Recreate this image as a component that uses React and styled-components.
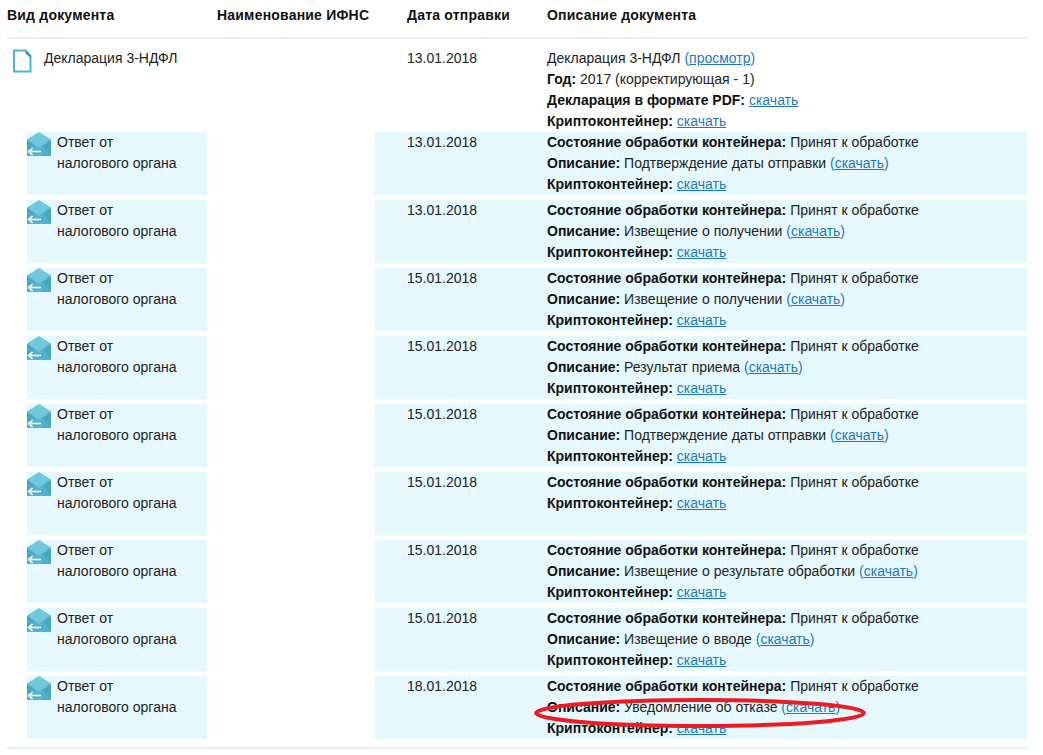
import React from "react";
import styled, { createGlobalStyle } from "styled-components";

const Global = createGlobalStyle`
  html, body {
    margin: 0;
    padding: 0;
    background: #fff;
    overflow: hidden;
  }
  body {
    font-family: "Liberation Sans", Arial, sans-serif;
    font-size: 14px;
    line-height: 21px;
    color: #222;
  }
`;

const Page = styled.div`
  position: relative;
  width: 1043px;
  height: 755px;
  overflow: hidden;
  padding: 0 16px 0 7px;
  box-sizing: border-box;
`;

const Head = styled.div`
  display: grid;
  grid-template-columns: 210px 158px 172px 1fr;
  height: 37px;
  border-bottom: 2px solid #e8f0f6;
  font-weight: bold;
  color: #111;
  line-height: 31px;
`;

const HeadCell = styled.div`
  padding-left: ${(p) => p.$pad || 0}px;
  letter-spacing: 0.2px;
`;

const MainRow = styled.div`
  display: grid;
  grid-template-columns: 210px 158px 172px 1fr;
  height: 93px;
  padding-top: 9px;
  box-sizing: border-box;
`;

const TopKind = styled.div`
  display: flex;
  gap: 8px;
  padding-left: 3px;
`;

const KindBlock = styled.div`
  display: flex;
  width: 180px;
  height: 63px;
  margin-left: 20px;
  background: #e5f8fd;
  gap: 6px;
`;

const ChildRow = styled.div`
  display: grid;
  grid-template-columns: 210px 158px 172px 1fr;
  height: 63px;
  margin-bottom: 5px;
`;

const Empty = styled.div``;

const DateCell = styled.div`
  padding-left: 32px;
  background: ${(p) => (p.$tinted ? "#e5f8fd" : "transparent")};
`;

const Descr = styled.div`
  background: ${(p) => (p.$tinted ? "#e5f8fd" : "transparent")};
`;

const Line = styled.div`
  height: 21px;
  white-space: nowrap;
`;

const Label = styled.b`
  color: #111;
`;

const Link = styled.a`
  color: #1f78bd;
  text-decoration: underline;
  cursor: pointer;
`;

const Paren = styled.span`
  color: #1f78bd;
`;

const IconBox = styled.svg`
  flex: none;
  display: block;
`;

const Footer = styled.div`
  height: 2px;
  margin-top: 8px;
  background: #e8f0f6;
`;

const Mark = styled.svg`
  position: absolute;
  left: 530px;
  top: 693px;
  pointer-events: none;
`;

const FileIcon = () => (
  <IconBox width="26" height="26" viewBox="0 0 26 26">
    <path d="M4 2.5h11.5l5 5.5v15.5H4z" fill="#fff" stroke="#4bb8d8" strokeWidth="2" />
    <path d="M20.5 9.5v-2l-5-5v3z" fill="#2f8fa8" />
  </IconBox>
);

const EnvelopeIcon = () => (
  <IconBox width="24" height="24" viewBox="0 0 24 24">
    <path d="M0 7.5L12 0l12 7.5V24H0z" fill="#6fc8dc" />
    <path d="M0 7.5L12 16l12-8.5V24H0z" fill="#44a8c4" />
    <path d="M0 18l8-5 4 3 4-3 8 11H0z" fill="#51b3cd" />
    <path d="M1 19.5h13" stroke="#fff" strokeWidth="1.6" fill="none" />
    <path d="M5.5 16L2 19.5 5.5 23" stroke="#fff" strokeWidth="1.6" fill="none" />
  </IconBox>
);

const rows = [
  { date: "13.01.2018", text: "Подтверждение даты отправки" },
  { date: "13.01.2018", text: "Извещение о получении" },
  { date: "15.01.2018", text: "Извещение о получении" },
  { date: "15.01.2018", text: "Результат приема" },
  { date: "15.01.2018", text: "Подтверждение даты отправки" },
  { date: "15.01.2018", text: null },
  { date: "15.01.2018", text: "Извещение о результате обработки" },
  { date: "15.01.2018", text: "Извещение о вводе" },
  { date: "18.01.2018", text: "Уведомление об отказе" },
];

const App = () => (
  <Page>
    <Global />
    <Head>
      <HeadCell>Вид документа</HeadCell>
      <HeadCell>Наименование ИФНС</HeadCell>
      <HeadCell $pad={32}>Дата отправки</HeadCell>
      <HeadCell>Описание документа</HeadCell>
    </Head>

    <MainRow>
      <TopKind>
        <FileIcon />
        <span>Декларация 3-НДФЛ</span>
      </TopKind>
      <Empty />
      <DateCell>13.01.2018</DateCell>
      <Descr>
        <Line>
          Декларация 3-НДФЛ <Paren>(</Paren>
          <Link>просмотр</Link>
          <Paren>)</Paren>
        </Line>
        <Line>
          <Label>Год:</Label> 2017 (корректирующая - 1)
        </Line>
        <Line>
          <Label>Декларация в формате PDF:</Label> <Link>скачать</Link>
        </Line>
        <Line>
          <Label>Криптоконтейнер:</Label> <Link>скачать</Link>
        </Line>
      </Descr>
    </MainRow>

    {rows.map((row, i) => (
      <ChildRow key={i}>
        <KindBlock>
          <EnvelopeIcon />
          <div>
            <Line>Ответ от</Line>
            <Line>налогового органа</Line>
          </div>
        </KindBlock>
        <Empty />
        <DateCell $tinted>{row.date}</DateCell>
        <Descr $tinted>
          <Line>
            <Label>Состояние обработки контейнера:</Label> Принят к обработке
          </Line>
          {row.text && (
            <Line>
              <Label>Описание:</Label> {row.text} <Paren>(</Paren>
              <Link>скачать</Link>
              <Paren>)</Paren>
            </Line>
          )}
          <Line>
            <Label>Криптоконтейнер:</Label> <Link>скачать</Link>
          </Line>
        </Descr>
      </ChildRow>
    ))}
    <Footer />

    <Mark width="340" height="40" viewBox="0 0 340 40">
      <ellipse cx="170" cy="20" rx="164" ry="13" fill="none" stroke="#ed1c24" strokeWidth="4" />
    </Mark>
  </Page>
);

export default App;
